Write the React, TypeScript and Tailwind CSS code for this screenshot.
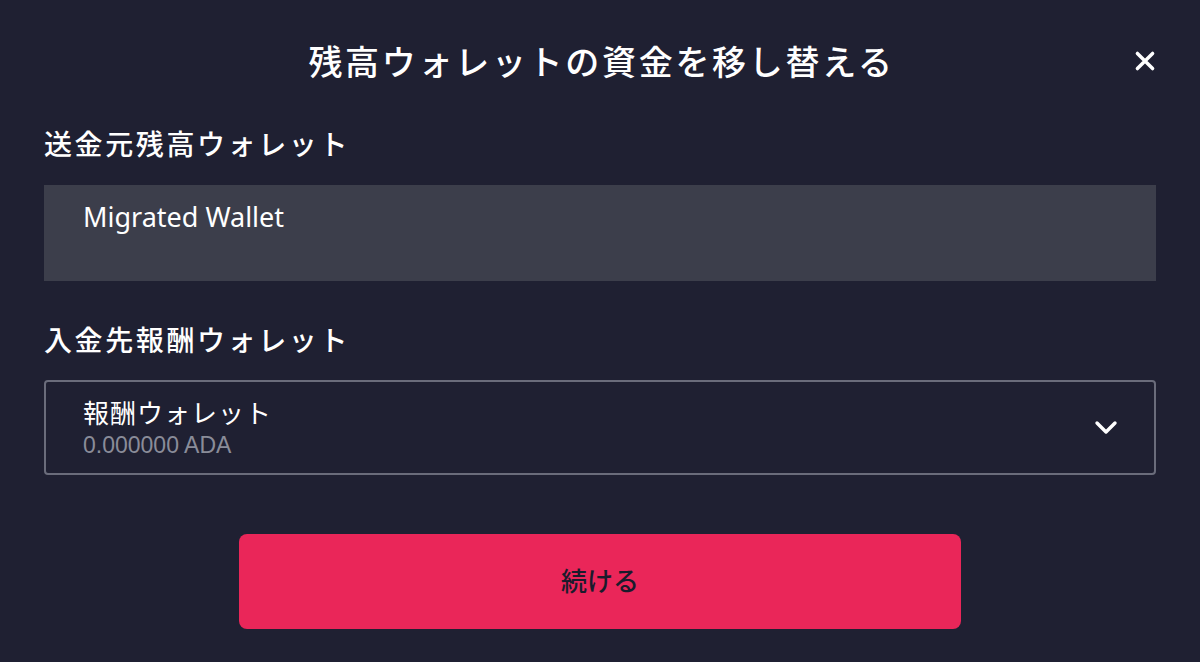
const FONT = "font-['Noto_Sans','Noto_Sans_CJK_JP',sans-serif]"

function CloseIcon() {
  return (
    <svg viewBox="0 0 24 24" className="w-[26px] h-[26px]" fill="none" stroke="white" strokeWidth={3.2} strokeLinecap="round">
      <path d="M5 5l14 14M19 5L5 19" />
    </svg>
  )
}

function ChevronDown() {
  return (
    <svg viewBox="0 0 24 16" className="w-[24px] h-[16px]" fill="none" stroke="white" strokeWidth={3.4} strokeLinecap="round" strokeLinejoin="round">
      <path d="M3 3l9 9 9-9" />
    </svg>
  )
}

export default function App() {
  return (
    <div className={`w-[1200px] h-[662px] bg-[#1f2032] text-white ${FONT} px-[44px]`}>
      <div className="relative h-[124px] flex items-center justify-center">
        <h1 className="text-[34px] leading-[40px] font-medium tracking-[2.7px] pl-[3px]">残高ウォレットの資金を移し替える</h1>
        <button className="absolute right-[-2px] top-[48px]">
          <CloseIcon />
        </button>
      </div>

      <label className="block text-[28px] leading-[40px] font-medium tracking-[2.6px]">送金元残高ウォレット</label>
      <div className="mt-[21px] h-[96px] bg-[#3c3e4b] pl-[39px] pt-[16px]">
        <span className="text-[27px] leading-[32px]">Migrated Wallet</span>
      </div>

      <label className="block mt-[39px] text-[28px] leading-[40px] font-medium tracking-[2.6px]">入金先報酬ウォレット</label>
      <div className="mt-[20px] h-[95px] border-2 border-[#6a6c7b] rounded-[4px] pl-[37px] pr-[36px] flex items-center justify-between">
        <div className="flex flex-col">
          <span className="text-[26px] leading-[32px] tracking-[1px]">報酬ウォレット</span>
          <span className="mt-[2px] text-[23px] leading-[28px] text-[#8a8c99] font-['Liberation_Sans',Arial,sans-serif]">0.000000 ADA</span>
        </div>
        <ChevronDown />
      </div>

      <button className="block mx-auto mt-[59px] w-[722px] h-[95px] rounded-[8px] bg-[#ea2659] text-[#1a1b2c] text-[26px] font-medium">
        続ける
      </button>
    </div>
  )
}
